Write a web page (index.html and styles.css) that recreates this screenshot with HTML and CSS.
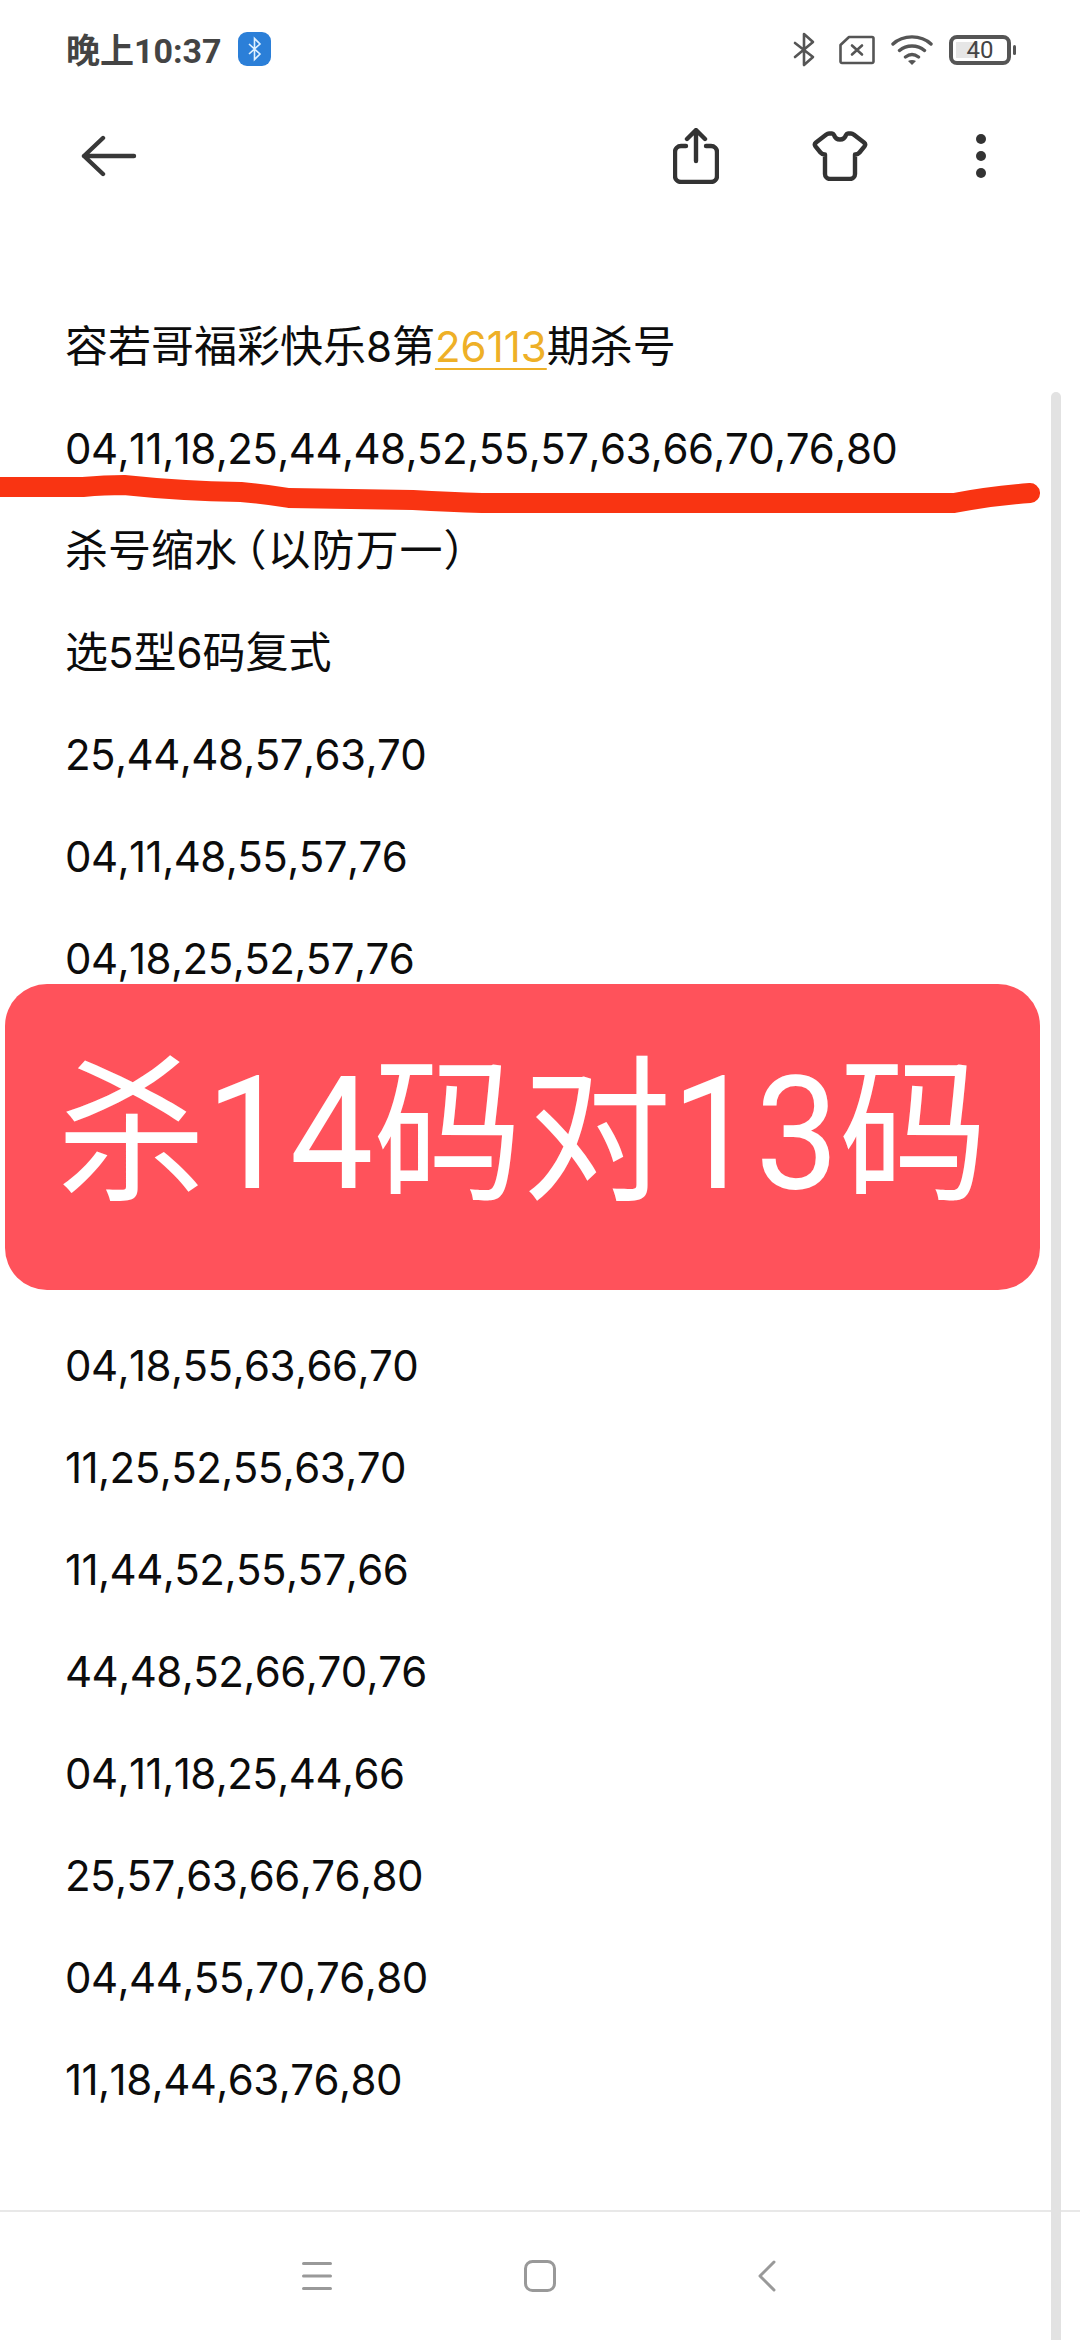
FILE: index.html
```html
<!DOCTYPE html>
<html lang="zh-Hans">
<head>
  <meta charset="UTF-8">
  <title>杀号</title>
  <link rel="stylesheet" href="styles.css">
</head>
<body>
  <!-- status bar -->
  <div class="status">
    <span class="time">晚上10:37</span>
    <svg class="bt-badge" width="33" height="34" viewBox="0 0 33 34">
      <rect width="33" height="34" rx="9" fill="#2b7fd8"/>
      <path d="M11 12l11 10-5.500 5.500V6.500L22 12 11 22" fill="none" stroke="#dff1ff" stroke-width="1.600"/>
    </svg>
    <div class="status-right">
      <svg class="bt" width="22" height="36" viewBox="0 0 22 36">
        <path d="M2 11l18 14-9 8V2l9 8L2 25" fill="none" stroke="#555" stroke-width="2.600" stroke-linecap="round" stroke-linejoin="round"/>
      </svg>
      <svg width="36" height="30" viewBox="0 0 36 30">
        <path d="M1.500 10L10 2h23a1.500 1.500 0 0 1 1.500 1.500v23a1.500 1.500 0 0 1-1.500 1.500H3a1.500 1.500 0 0 1-1.500-1.500z" fill="none" stroke="#555" stroke-width="2.600" stroke-linejoin="round"/>
        <path d="M13 10.500l10 9M23 10.500l-10 9" stroke="#555" stroke-width="2.600" stroke-linecap="round"/>
      </svg>
      <svg width="42" height="32" viewBox="0 0 42 32">
        <path d="M2 10C12 .5 30 .5 40 10M8.500 16.500c7-6 18-6 25 0M14.500 23c4-3 9-3 13 0" fill="none" stroke="#555" stroke-width="3.400" stroke-linecap="round"/>
        <path d="M21 31l-4-4c2.500-1.500 5.500-1.500 8 0z" fill="#555"/>
      </svg>
      <div class="battery">
        <div class="battery-box"><span class="battery-fill"></span><span class="battery-num">40</span></div>
        <span class="battery-tip"></span>
      </div>
    </div>
  </div>

  <!-- toolbar -->
  <div class="toolbar">
    <svg class="back" width="58" height="42" viewBox="0 0 58 42">
      <path d="M23 3L4 21l19 18M4 21h50" fill="none" stroke="#383838" stroke-width="4.400" stroke-linecap="round" stroke-linejoin="round"/>
    </svg>
    <div class="toolbar-right">
      <svg width="46" height="56" viewBox="0 0 46 56">
        <path d="M13 18H8a6 6 0 0 0-6 6v24a6 6 0 0 0 6 6h30a6 6 0 0 0 6-6V24a6 6 0 0 0-6-6h-5" fill="none" stroke="#333" stroke-width="4.400" stroke-linecap="round"/>
        <path d="M23 33V3M14 11l9-9 9 9" fill="none" stroke="#333" stroke-width="4.400" stroke-linecap="round" stroke-linejoin="round"/>
      </svg>
      <svg width="56" height="50" viewBox="0 0 56 50">
        <path d="M17 2.500H20C21 2.500 21.500 3 22 4C23 7 25 8.500 28 8.500S33 7 34 4C34.500 3 35 2.500 36 2.500H39C40 2.500 41 3 42 3.800L52 11.500C53.500 12.800 53.500 14 52.500 15.300L47.500 21.500C46.500 22.700 45 23.500 43 23.500V43A5 5 0 0 1 38 48H18A5 5 0 0 1 13 43V23.500C11 23.500 9.500 22.700 8.500 21.500L3.500 15.300C2.500 14 2.500 12.800 4 11.500L14 3.800C15 3 16 2.500 17 2.500Z" fill="none" stroke="#333" stroke-width="4.400" stroke-linejoin="round"/>
      </svg>
      <svg class="dots" width="12" height="46" viewBox="0 0 12 46">
        <circle cx="6" cy="6" r="5" fill="#333"/>
        <circle cx="6" cy="23" r="5" fill="#333"/>
        <circle cx="6" cy="40" r="5" fill="#333"/>
      </svg>
    </div>
  </div>

  <!-- note body -->
  <div class="note">
    <p>容若哥福彩快乐<span class="nums">8</span>第<span class="nums link">26113</span>期杀号</p>
    <p class="nums">04,11,18,25,44,48,52,55,57,63,66,70,76,80</p>
    <p>杀号缩水<span class="paren">（以防万一）</span></p>
    <p>选<span class="nums">5</span>型<span class="nums">6</span>码复式</p>
    <p class="nums">25,44,48,57,63,70</p>
    <p class="nums">04,11,48,55,57,76</p>
    <p class="nums">04,18,25,52,57,76</p>
    <div class="banner"><span class="banner-text">杀14码对13码</span></div>
    <p class="nums">04,18,55,63,66,70</p>
    <p class="nums">11,25,52,55,63,70</p>
    <p class="nums">11,44,52,55,57,66</p>
    <p class="nums">44,48,52,66,70,76</p>
    <p class="nums">04,11,18,25,44,66</p>
    <p class="nums">25,57,63,66,76,80</p>
    <p class="nums">04,44,55,70,76,80</p>
    <p class="nums">11,18,44,63,76,80</p>
  </div>

  <!-- hand drawn mark over the second line -->
  <svg class="scribble" width="1040" height="50" viewBox="0 0 1040 50">
    <path d="M-12 17L83 17Q105 15 124 15Q180 21 241 22Q265 24 289 28L413 30Q450 32 482 33L954 33Q990 26 1030 23" fill="none" stroke="#f93412" stroke-width="20" stroke-linecap="round"/>
  </svg>
  <div class="scrollbar"></div>

  <!-- navigation bar -->
  <div class="navbar">
    <svg width="30" height="30" viewBox="0 0 30 30">
      <path d="M1.500 2.500h27M1.500 15h27M1.500 27.500h27" stroke="#999" stroke-width="3" stroke-linecap="round"/>
    </svg>
    <svg width="32" height="32" viewBox="0 0 32 32">
      <rect x="1.500" y="1.500" width="29" height="29" rx="7" fill="none" stroke="#999" stroke-width="3"/>
    </svg>
    <svg class="nav-back" width="18" height="32" viewBox="0 0 18 32">
      <path d="M16 2L2 16l14 14" fill="none" stroke="#999" stroke-width="3" stroke-linecap="round" stroke-linejoin="round"/>
    </svg>
  </div>
</body>
</html>
```

FILE: styles.css
```css
html, body { margin: 0; padding: 0; }
body {
  width: 1080px;
  height: 2340px;
  position: relative;
  overflow: hidden;
  background: #fff;
  font-family: "Roboto", "Noto Sans CJK SC", sans-serif;
  color: #0c0c0c;
  display: flex;
  flex-direction: column;
}

.status { height: 100px; display: flex; align-items: center; padding: 0 64px 0 66px; box-sizing: border-box; }
.time { font-size: 34px; font-weight: 700; color: #444; margin-bottom: 4px; }
.bt-badge { margin: 0 0 2px 16px; }
.status-right { margin-left: auto; display: flex; align-items: center; gap: 16px; }
.bt { margin-right: 8px; }
.battery { display: flex; align-items: center; gap: 2px; }
.battery-box { width: 62px; height: 30px; border: 4px solid #555; border-radius: 8px; box-sizing: border-box; position: relative; display: flex; align-items: center; justify-content: center; }
.battery-fill { position: absolute; left: 3px; top: 3px; bottom: 3px; width: 40%; background: #e6e6e6; }
.battery-num { position: relative; font-size: 24px; color: #444; line-height: 1; }
.battery-tip { width: 3px; height: 10px; background: #555; border-radius: 2px; }

.toolbar { height: 112px; display: flex; align-items: center; padding: 0 93px 0 80px; box-sizing: border-box; }
.toolbar-right { margin-left: auto; display: flex; align-items: center; gap: 93px; }
.dots { margin-left: 14px; }

.note { padding-top: 110px; }
.note p { margin: 0 0 52px; padding-left: 65px; font-size: 43px; line-height: 50px; white-space: nowrap; }
.nums, .note p.nums { font-family: "Inter", "Noto Sans CJK SC", sans-serif; font-size: 42px; font-kerning: none; }
.note p.nums { letter-spacing: -0.55px; }
.link { color: #eeb027; text-decoration: underline; text-decoration-thickness: 2px; text-underline-offset: 6px; }
.paren { margin-left: 8px; letter-spacing: 1px; font-feature-settings: "halt"; }

.banner {
  width: 1035px;
  height: 306px;
  margin: -52px 0 51px 5px;
  border-radius: 42px;
  background: #ff525b;
  color: #fff;
  font-size: 149px;
  display: flex;
  align-items: center;
  justify-content: center;
}
.banner-text { display: block; margin-bottom: 36px; transform: scaleY(1.055); }

.scribble { position: absolute; left: 0; top: 470px; }
.scrollbar { position: absolute; left: 1051px; top: 392px; width: 10px; height: 1948px; background: #e2e2e2; border-radius: 5px 5px 0 0; }

.navbar {
  margin-top: auto;
  height: 130px;
  padding-left: 302px;
  border-top: 2px solid #e8e8e8;
  box-sizing: border-box;
  display: flex;
  column-gap: 192px;
  align-items: center;
}
.nav-back { margin-left: 10px; }
```
